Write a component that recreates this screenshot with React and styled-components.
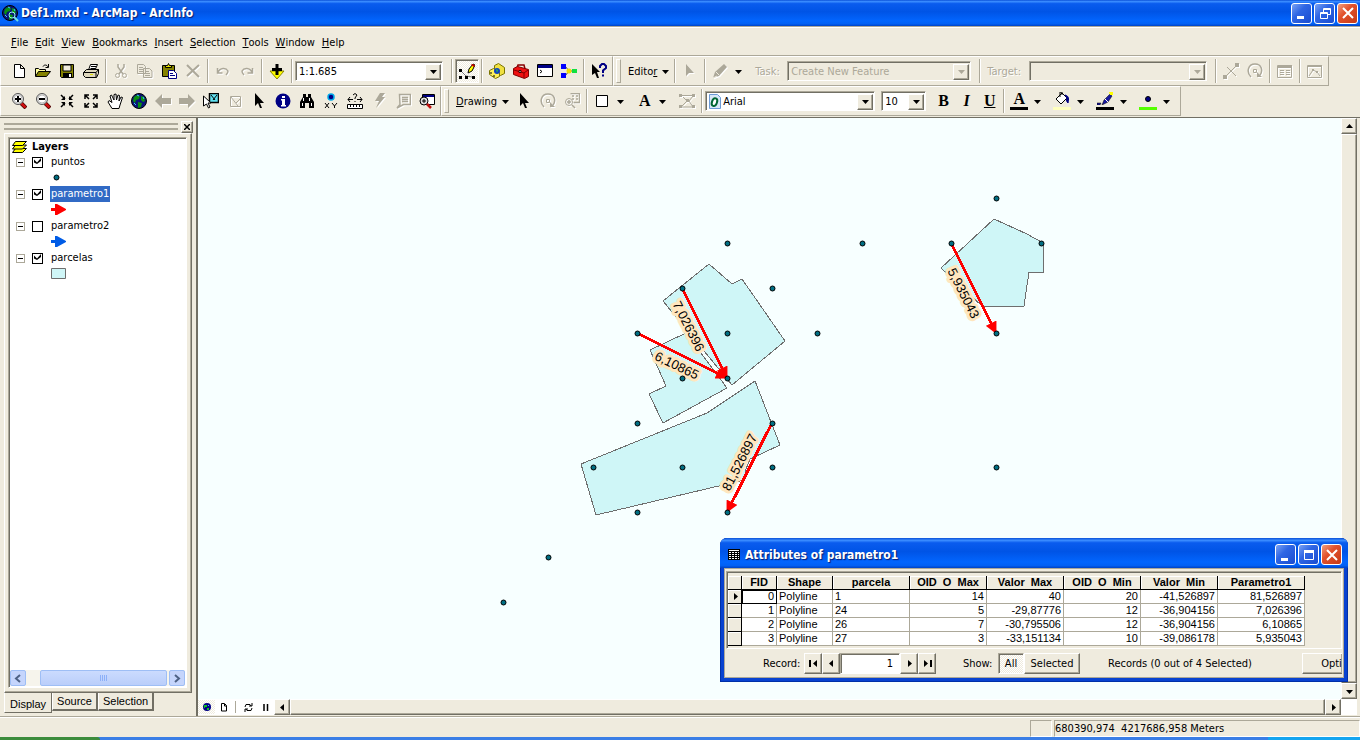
import React, { useState } from 'react'; // Import React and useState hook
import styled, { createGlobalStyle, css } from 'styled-components'; // Import styled-components for styling

// Menu entries of the main window
const menus = ['File', 'Edit', 'View', 'Bookmarks', 'Insert', 'Selection', 'Tools', 'Window', 'Help'];

// Sample points of the puntos layer
const points = [
    [798, 80], [529, 125], [664, 125], [753, 125], [843, 125], [574, 170], [484, 170],
    [439, 215], [529, 215], [619, 215], [798, 215], [484, 260], [529, 260], [439, 305],
    [574, 305], [395, 349], [484, 349], [574, 349], [798, 349], [439, 394], [529, 394],
    [350, 439], [305, 484],
];

// Polygons of the parcelas layer
const parcels = [
    '511,146 534,166 544,161 587,223 534,267 465,183',
    '488,215 452,232 468,268 451,276 465,305 529,270',
    '557,263 509,295 383,346 398,397 546,362 548,351 552,341 582,327',
    '796,101 829,116 845,125 845,154 831,154 826,188 784,188 743,150',
];

// Vectors of the parametro1 layer with their labels
const vectors = [
    { from: [484, 170], to: [529, 260], label: '7,026396', at: [491, 208], angle: 63 },
    { from: [439, 215], to: [529, 260], label: '6,10865', at: [479, 247], angle: 26 },
    { from: [574, 305], to: [529, 394], label: '81,526897', at: [541, 344], angle: -63 },
    { from: [753, 125], to: [798, 215], label: '5,935043', at: [766, 175], angle: 63 },
];

// Attribute table of parametro1
const columns = [
    { name: 'FID', width: 35, right: true },
    { name: 'Shape', width: 56 },
    { name: 'parcela', width: 77 },
    { name: 'OID  O  Max', width: 77, right: true },
    { name: 'Valor  Max', width: 77, right: true },
    { name: 'OID  O  Min', width: 77, right: true },
    { name: 'Valor  Min', width: 77, right: true },
    { name: 'Parametro1', width: 87, right: true },
];

const records = [
    ['0', 'Polyline', '1', '14', '40', '20', '-41,526897', '81,526897'],
    ['1', 'Polyline', '24', '5', '-29,87776', '12', '-36,904156', '7,026396'],
    ['2', 'Polyline', '26', '7', '-30,795506', '12', '-36,904156', '6,10865'],
    ['3', 'Polyline', '27', '3', '-33,151134', '10', '-39,086178', '5,935043'],
];

// Drawings of the toolbar icons, all on a 16 x 16 grid
const lens = (
    <>
        <path d='M10 10l5 5' stroke='#400' strokeWidth='4' />
        <path d='M10 10l4.5 4.5' stroke='#d01010' strokeWidth='2.5' />
        <circle cx='7' cy='6' r='5.5' fill='#e8e8e8' stroke='#555' />
        <circle cx='7' cy='6' r='4' fill='#fff' stroke='#bbb' />
    </>
);

const globe = (
    <>
        <circle cx='8' cy='8' r='7.5' fill='#0a1478' stroke='#000' />
        <path d='M3 4l3-2 3 1-1 3-3 1-1 3-2-2zM10 3l3 1 1 4-2 1-2-2zM7 9l4 1-1 4-3 1z' fill='#089010' />
        <path d='M3 10l2 2M12 4l1 2M6 2l2 1' stroke='#3cc8ff' />
    </>
);

const pointer = <path d='M4 0v13l3-3 2 5h2l-2-5h4z' fill='currentColor' />;

const icons = {
    new: <path d='M3.5 1.5h6l4 4v9h-10zM9.5 1.5v4h4' fill='#fff' stroke='#000' />,
    open: (
        <>
            <path d='M.5 13V5.5h3l1 1h6V9' fill='#ffff9c' stroke='#000' />
            <path d='M.5 13.5l3-5h12l-4 5z' fill='#848200' stroke='#000' />
            <path d='M8 3.5c1-2 4-2 5 .5M13.5 1v3.5h-3' fill='none' stroke='#000' />
        </>
    ),
    save: (
        <>
            <path d='M1.5 1.5h13v13h-12l-1-1z' fill='#848200' stroke='#000' />
            <path d='M4 2h8v6H4z' fill='#efebde' stroke='#000' />
            <path d='M4 10h9v5H4z' fill='#000' />
            <path d='M10 11h2v3h-2z' fill='#fff' />
        </>
    ),
    print: (
        <>
            <path d='M5.5 7l2-5.5h7L12 7z' fill='#fff' stroke='#000' />
            <path d='M8 3.5h5M7.5 5.5h5' stroke='#000' />
            <path d='M.5 9.5l3-3h12v4l-2 4h-11l-2-2z' fill='#ded7bd' stroke='#000' />
            <path d='M.5 9.5h12.5v5M13 9.5l2.5-3' fill='none' stroke='#000' />
            <path d='M7 11.5h3' stroke='#dede00' />
        </>
    ),
    cut: (
        <>
            <path d='M5 1v3l5 7M11 1v3l-5 7' fill='none' stroke='currentColor' strokeWidth='1.5' />
            <circle cx='4.5' cy='12.5' r='2' fill='none' stroke='currentColor' />
            <circle cx='11.5' cy='12.5' r='2' fill='none' stroke='currentColor' />
        </>
    ),
    copy: (
        <path
            d='M.5 1.5h6l2 2v7h-8zM2 4.5h4M2 6.5h4M2 8.5h4M6.5 5.5h6l2.5 2.5v6.5H6.5zM8 8.5h4M8 10.5h5M8 12.5h5'
            fill='#efebde'
            stroke='currentColor'
        />
    ),
    paste: (
        <>
            <path d='M1.5 2.5h12v11h-12z' fill='#848200' stroke='#000' />
            <path d='M4.5 4.5v-2h2l1-2 1 2h2v2z' fill='#e7e300' stroke='#000' />
            <path d='M7.5 7.5h5l3 3v5h-8z' fill='#fff' stroke='#000084' />
            <path d='M9 10.5h3M9 12.5h5' stroke='#000084' />
        </>
    ),
    remove: <path d='M2 2l12 12M14 2L2 13' stroke='currentColor' strokeWidth='2' />,
    undo: <path d='M2.5 5v5h5M3 9.5c2-5 8-5 10-1.5 0 2-1 3-2 4' fill='none' stroke='currentColor' strokeWidth='1.5' />,
    redo: <path d='M13.5 5v5h-5M13 9.5c-2-5-8-5-10-1.5 0 2 1 3 2 4' fill='none' stroke='currentColor' strokeWidth='1.5' />,
    add: (
        <>
            <path d='M1 8h14l-7 8z' fill='#ffff00' stroke='#8a8400' />
            <path d='M8 1v11M3 6.5h10' stroke='#000' strokeWidth='3' />
        </>
    ),
    editor: (
        <>
            <path d='M2 8l5 5 6 1' fill='none' stroke='#777' />
            <path d='M0 6h3v3H0zM0 13h3v3H0zM6 13h3v3H6zM13 13h3v3h-3z' fill='#000' />
            <path d='M9 10l1-4 4-5 2 1-3 6z' fill='#ffff00' stroke='#000' />
            <path d='M13 1l3 1-1 2-3-2z' fill='#c00' />
        </>
    ),
    catalog: (
        <>
            <path d='M5.5 2.5l4-2 6 4v6l-4 2-6-4z' fill='#f0e040' stroke='#7a7400' />
            <path d='M.5 7.5l4-2 6 4v4l-4 2-6-4z' fill='#ffef5a' stroke='#7a7400' />
            <circle cx='8' cy='8' r='3' fill='#1040c0' />
            <path d='M7 6l2 1-1 3z' fill='#30c040' />
            <path d='M2 9v2M4 13h2' stroke='#000' />
        </>
    ),
    toolbox: (
        <>
            <path d='M4 5l1-3h6l1 4' fill='none' stroke='#800' strokeWidth='1.5' />
            <path d='M.5 5.5l4-2 11 3v7l-4 2-11-4z' fill='#f01010' stroke='#800000' />
            <path d='M1 7l10 3 4-3M11 10v5' fill='none' stroke='#800000' />
            <path d='M6 7.5h2v2H6z' fill='#ddd' stroke='#400' />
        </>
    ),
    command: (
        <>
            <path d='M.5 1.5h15v12H.5z' fill='#fff' stroke='#000' />
            <path d='M1 2h14v3H1z' fill='#000084' />
            <path d='M3 7l2 1.5L3 10' fill='none' stroke='#000' />
        </>
    ),
    model: (
        <>
            <path d='M4 3l4 5 5 0M4 13l4-5' fill='none' stroke='#444' />
            <path d='M0 1h5v5H0zM0 10h5v5H0z' fill='#0000ff' />
            <circle cx='8' cy='8' r='2.5' fill='#f0e000' />
            <path d='M11 6h5v4h-5z' fill='#10e040' />
        </>
    ),
    help: (
        <>
            <path d='M1 1v11l3-2 2 5h2L6 9h3z' fill='#000' />
            <path d='M9 5V3l2-2h2l2 2v2l-3 2.5V10M11 12.5h2' fill='none' stroke='#000084' strokeWidth='2' />
        </>
    ),
    smallPointer: <path d='M4 1v12l3-3h5z' fill='currentColor' />,
    pencil: (
        <>
            <path d='M1 15l2-6 9-8 3 3-8 9z' fill='currentColor' />
            <path d='M4 9l3 3M1 15l4-2' stroke='#efebde' />
        </>
    ),
    split: (
        <>
            <path d='M2 14L14 2M4 4l9 9' stroke='currentColor' />
            <path d='M0 12h4v4H0zM12 0h4v4h-4z' fill='currentColor' />
        </>
    ),
    rotate: (
        <>
            <path d='M4 14C-1 9 1 1 8 1c7 0 8 7 5 11' fill='none' stroke='currentColor' strokeWidth='1.5' />
            <path d='M10 9v5h5z' fill='currentColor' />
            <path d='M6.5 6.5h3v3h-3z' fill='none' stroke='currentColor' />
        </>
    ),
    attributes: (
        <>
            <path d='M.5 2.5h14v12H.5zM3 7.5h4M3 9.5h4M3 11.5h4M9 7.5h4M9 9.5h4M9 11.5h4' fill='none' stroke='currentColor' />
            <path d='M1 2h14v3H1z' fill='currentColor' />
        </>
    ),
    sketch: (
        <>
            <path d='M.5 2.5h14v12H.5zM2 13l4-6 4 2 3 4' fill='none' stroke='currentColor' />
            <path d='M1 2h14v2H1zM5 6h2v2H5zM9 8h2v2H9z' fill='currentColor' />
        </>
    ),
    zoomIn: <>{lens}<path d='M4 6h6M7 3v6' stroke='#000' strokeWidth='2' /></>,
    zoomOut: <>{lens}<path d='M4 6h6' stroke='#000' strokeWidth='2' /></>,
    shrink: (
        <>
            <path d='M2 2l4 4M14 2l-4 4M2 14l4-4M14 14l-4-4' stroke='#000' strokeWidth='1.5' />
            <path d='M6 3v4H2zM10 3v4h4zM6 13V9H2zM10 13V9h4z' fill='#000' />
        </>
    ),
    grow: (
        <path
            d='M2 2l4 4M14 2l-4 4M2 14l4-4M14 14l-4-4M6 2H2v4M10 2h4v4M6 14H2v-4M10 14h4v-4'
            fill='none'
            stroke='#000'
            strokeWidth='1.5'
        />
    ),
    pan: (
        <path
            d='M5 15.5L1 9l1-1.5 3 2L3 3l1.5-1L7 7V1.5l2-.5.5 6L11 2l1.5.5L12 8l2-4 1.5.5L13 12l-1 3.5z'
            fill='#fff'
            stroke='#000'
        />
    ),
    globe,
    back: <path d='M0 8l7-7v4h9v6H7v4z' fill='currentColor' />,
    forward: <path d='M16 8L9 1v4H0v6h9v4z' fill='currentColor' />,
    selectFeatures: (
        <>
            <path d='M6.5.5h9v9h-9z' fill='#60e0f0' stroke='#000' strokeWidth='1.5' />
            <path d='M8 2l4 5M14 2l-4 5' stroke='#000' />
            <path d='M.5 3v10l3-2 2 4 1.5-1-2-4h3z' fill='#fff' stroke='#000' />
        </>
    ),
    clearSelection: <path d='M3.5 3.5h10v10h-10zM4 4l7 9M13 6l-4 4' fill='none' stroke='currentColor' />,
    pointer,
    info: (
        <>
            <circle cx='8' cy='8' r='7.5' fill='#000084' />
            <path d='M7 3h3v2H7zM6 6h4v6h1v1.5H6V12h1V7.5H6z' fill='#fff' />
        </>
    ),
    find: (
        <>
            <path d='M4 1h3v3h2V1h3v3l3 5v6h-5v-5H6v5H1V9l3-5z' fill='#000' />
            <path d='M4.5 5v3M10.5 5v3M3.5 10v3M12.5 10v3' stroke='#fff' />
        </>
    ),
    goToXY: (
        <>
            <circle cx='8' cy='4' r='3' fill='#000084' stroke='#00a8e8' strokeWidth='1.5' />
            <path d='M2 10l4 5M6 10l-4 5M9 10l2.5 3M14 10l-2.5 3v2' fill='none' stroke='#000' />
        </>
    ),
    measure: (
        <>
            <path d='M1 6.5h5M10 6.5h5M3 4L1 6.5 3 9M13 4l2 2.5L13 9M6 2l2-1.5 2 1.5-2 3v1M8 8v1' fill='none' stroke='#000' />
            <path d='M.5 11.5h15v4H.5z' fill='#fff' stroke='#000' />
            <path d='M3.5 12v2M6.5 12v2M9.5 12v2M12.5 12v2' stroke='#000' />
        </>
    ),
    hyperlink: <path d='M9 0h5l-3 4h3l-9 11 3-7H4z' fill='currentColor' />,
    htmlPopup: (
        <path d='M4.5 1.5h11v10h-7L2 15l3-3.5zM7 4.5h6M7 6.5h6M7 8.5h6' fill='none' stroke='currentColor' strokeWidth='1.5' />
    ),
    magnifier: (
        <>
            <path d='M3.5 1.5h12v10h-12z' fill='#fff' stroke='#000' />
            <path d='M4 2h11v2H4z' fill='#000084' />
            <circle cx='5' cy='8' r='4' fill='#ddd' stroke='#000' />
            <path d='M3 8h4M5 6v4' stroke='#000' />
            <path d='M8 11l4 4' stroke='#c01010' strokeWidth='2.5' />
        </>
    ),
    zoomSelected: (
        <>
            <path d='M6.5.5h9v9h-6M8 3h2M12 3h2M8 6h2M12 6h2' fill='none' stroke='currentColor' strokeWidth='1.5' />
            <circle cx='5' cy='9' r='3.5' fill='none' stroke='currentColor' />
            <path d='M3 9h4M5 7v4M8 12l3 3' stroke='currentColor' strokeWidth='1.5' />
        </>
    ),
    rectangle: <path d='M2.5 2.5h11v11h-11z' fill='#fff' stroke='#000' />,
    vertices: (
        <>
            <path d='M2 2.5h12M4 4l4 4-6 6h12l-4-6 4-5' fill='none' stroke='currentColor' />
            <path d='M0 1h3v3H0zM13 1h3v3h-3zM7 6h3v3H7zM0 12h3v3H0zM13 12h3v3h-3z' fill='currentColor' />
        </>
    ),
    fill: (
        <>
            <path d='M2 8l6-6 5 5-6 6z' fill='#fff' stroke='#000' />
            <path d='M6 6V1h2v3' fill='none' stroke='#000' />
            <path d='M11 4c4 1 4 4 3 8-2-2-2-4-1-5z' fill='#000084' stroke='#000084' />
        </>
    ),
    brush: (
        <>
            <path d='M0 12h4l-1 2H0zM5 14l2-5 6-6 2 2-4 6z' fill='#1818a0' stroke='#000' strokeWidth='.5' />
            <path d='M12 1h4v3h-3z' fill='#ffff00' />
            <path d='M8 8l3 3' stroke='#fff' />
        </>
    ),
    marker: <circle cx='8' cy='8' r='2.5' fill='#000084' stroke='#000' />,
};

// Icon names of the toolbars, in drawing order
const navigationTools = [
    ['zoomIn', 'Zoom in'], ['zoomOut', 'Zoom out'], ['shrink', 'Fixed zoom in'], ['grow', 'Fixed zoom out'],
    ['pan', 'Pan'], ['globe', 'Full extent'], ['back', 'Back', true], ['forward', 'Forward', true],
    ['selectFeatures', 'Select features'], ['clearSelection', 'Clear selection', true],
    ['pointer', 'Select elements'], ['info', 'Identify'], ['find', 'Find'], ['goToXY', 'Go to XY'],
    ['measure', 'Measure'], ['hyperlink', 'Hyperlink', true], ['htmlPopup', 'HTML popup', true],
    ['magnifier', 'Magnifier window'],
];

const Arrow = ({ dir = 'down' }) => { // Small black triangle used by drop downs and scroll bars
    const shapes = { down: 'M0 2h7l-3.5 4z', up: 'M0 5h7L3.5 1z', left: 'M5 0v7L1 3.5z', right: 'M2 0v7l4-3.5z' };
    return (
        <svg width='7' height='7' viewBox='0 0 7 7'>
            <path d={shapes[dir]} fill='currentColor' />
        </svg>
    );
};

const Tool = ({ name, label, disabled, active }) => (
    <ToolButton aria-label={label} title={label} disabled={disabled} $active={active}>
        <svg width='16' height='16' viewBox='0 0 16 16'>{icons[name]}</svg>
    </ToolButton>
);

const ColorTool = ({ name, label, color, children }) => ( // Tool with the current colour below it and a drop down
    <>
        <ToolButton aria-label={label} title={label} $stacked>
            {children || <svg width='16' height='13' viewBox='0 1 16 13'>{icons[name]}</svg>}
            <Swatch $color={color} />
        </ToolButton>
        <DropButton aria-label={label + ' options'}><Arrow /></DropButton>
    </>
);

const Combo = ({ label, value, width, disabled, icon }) => (
    <ComboFrame $width={width} $disabled={disabled}>
        {icon}
        <select aria-label={label} disabled={disabled}>
            <option>{value}</option>
        </select>
        <span><Arrow /></span>
    </ComboFrame>
);

const WindowButtons = ({ restored }) => (
    <WindowControls>
        <WindowButton aria-label='Minimize'>
            <svg width='18' height='18'><path d='M4 12h7v3H4z' fill='#fff' /></svg>
        </WindowButton>
        <WindowButton aria-label={restored ? 'Maximize' : 'Restore'}>
            <svg width='18' height='18' fill='none' stroke='#fff'>
                {restored
                    ? <path d='M4 4.5h10M4 5.5h10M4 6.5h10M4.5 4v9.5h9V4' />
                    : <path d='M7.5 8V4.5h7v6H12M7 5.5h8M4.5 8.5h7v6h-7zM4 9.5h8' />}
            </svg>
        </WindowButton>
        <WindowButton aria-label='Close' $close>
            <svg width='18' height='18'><path d='M4 4l10 10M14 4L4 14' stroke='#fff' strokeWidth='2' /></svg>
        </WindowButton>
    </WindowControls>
);

const Layer = ({ name, checked, onToggle, selected, symbol }) => (
    <>
        <TreeRow>
            <Expander aria-label={'Collapse ' + name} />
            <CheckBox type='checkbox' id={name} checked={checked} onChange={onToggle} />
            <LayerName htmlFor={name} $selected={selected}>{name}</LayerName>
        </TreeRow>
        <SymbolRow>{symbol}</SymbolRow>
    </>
);

function Contents() {
    const [visible, setVisible] = useState({ puntos: true, parametro1: true, parametro2: false, parcelas: true });
    const toggle = name => () => setVisible({ ...visible, [name]: !visible[name] });

    const arrow = color => (
        <svg width='16' height='12'><path d='M0 4h4V0h2l9 5v1l-9 5H4V7H0z' fill={color} /></svg>
    );
    const symbols = {
        puntos: <svg width='12' height='12'><circle cx='5.5' cy='5.5' r='2.5' fill='#006e82' stroke='#000' /></svg>,
        parametro1: arrow('#f00'),
        parametro2: arrow('#005ce6'),
        parcelas: <svg width='16' height='12'><path d='M.5.5h14v10H.5z' fill='#cff6f7' stroke='#6e6e6e' /></svg>,
    };

    return (
        <Panel>
            <PanelHead>
                <Ridge />
                <CloseButton aria-label='Close layers'>
                    <svg width='6' height='6'><path d='M0 0l6 6M6 0L0 6' stroke='#000' strokeWidth='1.5' /></svg>
                </CloseButton>
            </PanelHead>
            <PanelBody>
                <Tree>
                    <TreeTitle>
                        <svg width='16' height='12' viewBox='0 0 16 12' fill='#ff0' stroke='#000'>
                            <path d='M.5 11.5l3-4h11l-4 4z' />
                            <path d='M.5 8l3-4h11l-4 4z' />
                            <path d='M.5 4.5l3-4h11l-4 4z' />
                        </svg>
                        Layers
                    </TreeTitle>
                    {Object.keys(symbols).map(name => (
                        <Layer
                            key={name}
                            name={name}
                            checked={visible[name]}
                            onToggle={toggle(name)}
                            selected={name === 'parametro1'}
                            symbol={symbols[name]}
                        />
                    ))}
                    <LunaScroll>
                        <LunaButton aria-label='Scroll left'>
                            <svg width='8' height='9'><path d='M6 1L2 4.5 6 8' /></svg>
                        </LunaButton>
                        <LunaTrack><LunaThumb><i /><i /><i /><i /></LunaThumb></LunaTrack>
                        <LunaButton aria-label='Scroll right'>
                            <svg width='8' height='9'><path d='M2 1l4 3.5L2 8' /></svg>
                        </LunaButton>
                    </LunaScroll>
                </Tree>
            </PanelBody>
            <Tabs>
                <Tab $active>Display</Tab>
                <Tab>Source</Tab>
                <Tab>Selection</Tab>
            </Tabs>
        </Panel>
    );
}

function MapView() {
    return (
        <MapArea>
            <MapRow>
                <MapCanvas>
                    <defs>
                        <marker id='head' markerUnits='userSpaceOnUse' markerWidth='12' markerHeight='12' refX='11' refY='6' orient='auto'>
                            <path d='M0 0l12 6-12 6z' fill='#f00' />
                        </marker>
                    </defs>
                    {parcels.map(shape => (
                        <polygon key={shape} points={shape} fill='#cff6f7' stroke='#6e6e6e' shapeRendering='crispEdges' />
                    ))}
                    {vectors.map(({ label, at, angle }) => (
                        <MapLabel key={label} transform={`translate(${at[0]} ${at[1]}) rotate(${angle})`} y='5'>
                            {label}
                        </MapLabel>
                    ))}
                    {vectors.map(({ from, to, label }) => (
                        <line
                            key={label}
                            x1={from[0]}
                            y1={from[1]}
                            x2={to[0]}
                            y2={to[1]}
                            stroke='#f00'
                            strokeWidth='3'
                            shapeRendering='crispEdges'
                            markerEnd='url(#head)'
                        />
                    ))}
                    {points.map(([x, y]) => (
                        <circle key={x + '-' + y} cx={x + 0.5} cy={y + 0.5} r='2.5' fill='#006e82' stroke='#000' />
                    ))}
                </MapCanvas>
                <ScrollColumn>
                    <ScrollButton aria-label='Scroll up'><Arrow dir='up' /></ScrollButton>
                    <ScrollThumb />
                    <ScrollButton aria-label='Scroll down'><Arrow /></ScrollButton>
                </ScrollColumn>
            </MapRow>
            <MapFooter>
                <ViewButton aria-label='Data view' $active>
                    <svg width='8' height='8'>
                        <circle cx='4' cy='4' r='4' fill='#000084' />
                        <path d='M1 2h3v2H2v1H1zM4 5h2v2H4z' fill='#10c020' />
                        <path d='M5 2h1v1H5z' fill='#3cc8ff' />
                    </svg>
                </ViewButton>
                <ViewButton aria-label='Layout view'>
                    <svg width='8' height='9'><path d='M1.5.5h3l2 2v5.5h-5zM4.5 1v2h2' fill='#fff' stroke='#000' /></svg>
                </ViewButton>
                <FooterLine />
                <ViewButton aria-label='Refresh'>
                    <svg width='9' height='9'><path d='M1 4l1-2.5h4l1 1.5M8 0v3H5M8 5L7 7.5H3L2 6M1 9V6h3' fill='none' stroke='#000' /></svg>
                </ViewButton>
                <ViewButton aria-label='Pause'>
                    <svg width='6' height='7'><path d='M1 0v7M4.5 0v7' stroke='#000' strokeWidth='1.5' /></svg>
                </ViewButton>
                <ScrollButton aria-label='Scroll map left'><Arrow dir='left' /></ScrollButton>
                <ScrollThumb />
                <ScrollButton aria-label='Scroll map right'><Arrow dir='right' /></ScrollButton>
            </MapFooter>
        </MapArea>
    );
}

function Attributes() {
    const [record, setRecord] = useState('1'); // Number of the current record

    return (
        <AttributeWindow>
            <AttributeTitle>
                <svg width='12' height='11' viewBox='0 0 12 11'>
                    <path d='M0 0h12v11H0z' fill='#000' />
                    <path d='M1 1h10v1H1zM1 3h2v1H1zM4 3h2v1H4zM7 3h2v1H7zM10 3h1v1h-1zM1 5h2v1H1zM4 5h2v1H4zM7 5h2v1H7zM10 5h1v1h-1zM1 7h2v1H1zM4 7h2v1H4zM7 7h2v1H7zM10 7h1v1h-1zM1 9h2v1H1zM4 9h2v1H4zM7 9h2v1H7zM10 9h1v1h-1z' fill='#fff' />
                </svg>
                <h2>Attributes of parametro1</h2>
                <WindowButtons restored />
            </AttributeTitle>
            <AttributeBody>
                <TableFrame>
                    <Table>
                        <colgroup>
                            <Col $width={14} />
                            {columns.map(column => <Col key={column.name} $width={column.width} />)}
                        </colgroup>
                        <thead>
                            <tr>
                                <th aria-label='Row' />
                                {columns.map(column => <th key={column.name}>{column.name}</th>)}
                            </tr>
                        </thead>
                        <tbody>
                            {records.map((row, index) => (
                                <tr key={row[0]}>
                                    <RowHead>{index === 0 && <Arrow dir='right' />}</RowHead>
                                    {row.map((cell, i) => (
                                        <Cell key={i} $right={columns[i].right} $current={index === 0 && i === 0}>{cell}</Cell>
                                    ))}
                                </tr>
                            ))}
                        </tbody>
                    </Table>
                </TableFrame>
                <RecordBar>
                    <RecordLabel htmlFor='record'>Record:</RecordLabel>
                    <RecordButton aria-label='First record'>
                        <svg width='9' height='7'><path d='M0 0h2v7H0zM8 0v7L4 3.5z' /></svg>
                    </RecordButton>
                    <RecordButton aria-label='Previous record'><Arrow dir='left' /></RecordButton>
                    <RecordInput id='record' value={record} onChange={e => setRecord(e.target.value)} />
                    <RecordButton aria-label='Next record'><Arrow dir='right' /></RecordButton>
                    <RecordButton aria-label='Last record'>
                        <svg width='9' height='7'><path d='M7 0h2v7H7zM1 0v7l4-3.5z' /></svg>
                    </RecordButton>
                    <ShowLabel>Show:</ShowLabel>
                    <TextButton $width={26} $active>All</TextButton>
                    <TextButton $width={56}>Selected</TextButton>
                    <RecordCount>Records (0 out of 4 Selected)</RecordCount>
                    <OptionsButton>Opti</OptionsButton>
                </RecordBar>
            </AttributeBody>
        </AttributeWindow>
    );
}

function App() {
    return (
        <Desktop>
            <GlobalStyle />
            <TitleBar>
                <svg width='17' height='17' viewBox='0 0 17 17'>
                    {globe}
                    <circle cx='10' cy='10' r='3' fill='none' stroke='#9ee' />
                    <path d='M12 12l4 4' stroke='#6fe0e0' strokeWidth='2' />
                </svg>
                <h1>Def1.mxd - ArcMap - ArcInfo</h1>
                <WindowButtons />
            </TitleBar>
            <MenuBar>
                {menus.map(menu => (
                    <MenuButton key={menu}><u>{menu[0]}</u>{menu.slice(1)}</MenuButton>
                ))}
            </MenuBar>
            <ToolbarRow>
                <Band>
                    <Tool name='new' label='New' />
                    <Tool name='open' label='Open' />
                    <Tool name='save' label='Save' />
                    <Tool name='print' label='Print' />
                    <Separator />
                    <Tool name='cut' label='Cut' disabled />
                    <Tool name='copy' label='Copy' disabled />
                    <Tool name='paste' label='Paste' />
                    <Tool name='remove' label='Delete' disabled />
                    <Separator />
                    <Tool name='undo' label='Undo' disabled />
                    <Tool name='redo' label='Redo' disabled />
                    <Separator />
                    <Tool name='add' label='Add data' />
                    <Separator />
                    <Combo label='Map scale' value='1:1.685' width={148} />
                    <Gap />
                    <Separator />
                    <Tool name='editor' label='Editor toolbar' active />
                    <Separator />
                    <Tool name='catalog' label='ArcCatalog' />
                    <Tool name='toolbox' label='ArcToolbox' />
                    <Tool name='command' label='Command line' />
                    <Tool name='model' label='ModelBuilder' />
                    <Separator />
                    <Tool name='help' label="What's this?" />
                </Band>
                <Band $grip>
                    <MenuTool>Edito<u>r</u><Arrow /></MenuTool>
                    <Separator />
                    <Tool name='smallPointer' label='Edit tool' disabled />
                    <Separator />
                    <Tool name='pencil' label='Sketch tool' disabled />
                    <DropButton aria-label='Sketch tools'><Arrow /></DropButton>
                    <ToolLabel $width={36}>Task:</ToolLabel>
                    <Combo label='Task' value='Create New Feature' width={184} disabled />
                    <Gap />
                    <Separator />
                    <ToolLabel $width={46}>Target:</ToolLabel>
                    <Combo label='Target' value='' width={178} disabled />
                    <Gap />
                    <Separator />
                    <Tool name='split' label='Split' disabled />
                    <Tool name='rotate' label='Rotate' disabled />
                    <Separator />
                    <Tool name='attributes' label='Attributes' disabled />
                    <Separator />
                    <Tool name='sketch' label='Sketch properties' disabled />
                </Band>
            </ToolbarRow>
            <ToolbarRow>
                <Band>
                    {navigationTools.map(([name, label, disabled]) => (
                        <Tool key={name} name={name} label={label} disabled={disabled} />
                    ))}
                </Band>
                <Band $grip>
                    <MenuTool><u>D</u>rawing<Arrow /></MenuTool>
                    <Tool name='pointer' label='Select drawing' />
                    <Tool name='rotate' label='Rotate drawing' disabled />
                    <Tool name='zoomSelected' label='Zoom to selected' disabled />
                    <Separator />
                    <Tool name='rectangle' label='New rectangle' />
                    <DropButton aria-label='Shapes'><Arrow /></DropButton>
                    <LetterButton aria-label='New text'>A</LetterButton>
                    <DropButton aria-label='Text tools'><Arrow /></DropButton>
                    <Tool name='vertices' label='Edit vertices' disabled />
                    <Separator />
                    <Combo
                        label='Font'
                        value='Arial'
                        width={170}
                        icon={(
                            <svg width='14' height='15'>
                                <path d='M1.5.5h8l3 3v11h-11z' fill='#d6e7f7' stroke='#6b9ad6' />
                                <ellipse cx='6.5' cy='8' rx='2.5' ry='4' fill='#fff' stroke='#063' strokeWidth='2' transform='rotate(20 6 8)' />
                            </svg>
                        )}
                    />
                    <Gap />
                    <Combo label='Font size' value='10' width={45} />
                    <Gap />
                    <LetterButton aria-label='Bold'>B</LetterButton>
                    <LetterButton aria-label='Italic' $italic>I</LetterButton>
                    <LetterButton aria-label='Underline'><u>U</u></LetterButton>
                    <Separator />
                    <ColorTool label='Font color' color='#000'><b>A</b></ColorTool>
                    <ColorTool name='fill' label='Fill color' color='#ffffbe' />
                    <ColorTool name='brush' label='Line color' color='#000' />
                    <ColorTool name='marker' label='Marker color' color='#55ff00' />
                </Band>
            </ToolbarRow>
            <Workspace>
                <Contents />
                <MapView />
                <Attributes />
            </Workspace>
            <StatusBar>
                <StatusCell $width={22} />
                <StatusCell $width={306}>680390,974&nbsp; 4217686,958 Meters</StatusCell>
            </StatusBar>
            <TaskBar><StartEdge /><TrayEdge /></TaskBar>
        </Desktop>
    );
}

const face = '#efebde'; // Colour of the window face
const shade = '#aca899'; // Colour of the darker edges

const raised = css`
    border: 1px solid;
    border-color: #fff #716f64 #716f64 #fff;
    box-shadow: inset -1px -1px 0 ${shade};
    background: ${face};
`;

const sunken = css`
    border: 1px solid;
    border-color: ${shade} #fff #fff ${shade};
    box-shadow: inset 1px 1px 0 #716f64;
`;

const dither = css`
    background: repeating-conic-gradient(#fff 0 25%, ${face} 0 50%) 0 0 / 2px 2px;
`;

const GlobalStyle = createGlobalStyle`
    *{
        box-sizing: border-box;
    }
    body{
        margin: 0;
        overflow: hidden;
        background: ${face};
    }
    body, button, input, select, table{
        font-family: 'DejaVu Sans Condensed', 'Liberation Sans', sans-serif;
        font-size: 11px;
        color: #000;
    }
    button{
        display: flex;
        align-items: center;
        justify-content: center;
        flex: none;
        padding: 0;
        border: none;
        background: none;
    }
    svg{
        flex: none;
    }
`;

const Desktop = styled.div`
    display: flex;
    flex-direction: column;
    height: 100vh;
    background: ${face};
`;

const TitleBar = styled.header`
    display: flex;
    align-items: center;
    flex: none;
    gap: 2px;
    height: 26px;
    padding: 0 2px;
    background: linear-gradient(#0a50d8 0, #3a8cff 6%, #0a5cee 14%, #0054e6 45%, #0265fe 80%, #0260f4 92%, #0042c4 100%);

    h1{
        flex: 1;
        margin: 0;
        font-size: 12px;
        line-height: 16px;
        color: #fff;
        text-shadow: 1px 1px 1px #0a1c6e;
    }
`;

const WindowControls = styled.div`
    display: flex;
    gap: 2px;
`;

const WindowButton = styled.button`
    width: 21px;
    height: 21px;
    border: 1px solid #fff;
    border-radius: 3px;
    background: ${({ $close }) => ($close
        ? 'linear-gradient(135deg, #f0a080, #e2512c 40%, #c63a16)'
        : 'linear-gradient(135deg, #7aa2f4, #2f66e4 40%, #1a4cd0)')};
`;

const MenuBar = styled.nav`
    display: flex;
    align-items: center;
    flex: none;
    gap: 7px;
    height: 30px;
    padding: 3px 11px 0;
    border-top: 1px solid ${shade};
    border-bottom: 1px solid ${shade};
    box-shadow: inset 0 1px 0 #fff;
`;

const MenuButton = styled.button`
    height: 20px;
`;

const ToolbarRow = styled.div`
    display: flex;
    flex: none;
    height: 30px;

    & + &{
        height: 31px;
    }
`;

const Band = styled.div`
    display: flex;
    align-items: center;
    height: 30px;
    padding: 0 1px 0 6px;
    border-style: solid;
    border-width: 1px;
    border-color: #fff ${shade} ${shade} #fff;

    ${({ $grip }) => $grip && css`
        &::before{
            content: '';
            width: 3px;
            height: 22px;
            margin: 0 4px 0 -4px;
            border: 1px solid;
            border-color: #fff ${shade} ${shade} #fff;
        }
    `}
`;

const ToolButton = styled.button`
    width: 24px;
    height: 24px;
    flex-direction: ${({ $stacked }) => ($stacked ? 'column' : 'row')};
    ${({ $active }) => $active && css`${sunken} ${dither}`}

    b{
        font-family: 'Liberation Serif', serif;
        font-size: 16px;
        line-height: 13px;
    }
    &:disabled{
        color: ${shade};
        filter: drop-shadow(1px 1px 0 #fff);
    }
`;

const Swatch = styled.span`
    width: 18px;
    height: 3px;
    margin-top: 2px;
    background: ${({ $color }) => $color};
`;

const DropButton = styled.button`
    width: 19px;
    height: 24px;
    padding-right: 6px;
`;

const LetterButton = styled.button`
    width: 23px;
    height: 24px;
    font-family: 'Liberation Serif', serif;
    font-size: 16px;
    font-weight: bold;
    font-style: ${({ $italic }) => ($italic ? 'italic' : 'normal')};
`;

const MenuTool = styled.button`
    height: 24px;
    padding: 0 3px;

    svg{
        margin-left: 5px;
    }
`;

const Separator = styled.span`
    flex: none;
    width: 2px;
    height: 24px;
    margin: 0 2px;
    border-left: 1px solid ${shade};
    border-right: 1px solid #fff;
`;

const Gap = styled.span`
    flex: none;
    width: 6px;
`;

const ToolLabel = styled.span`
    flex: none;
    width: ${({ $width }) => $width}px;
    padding-left: 4px;
    color: ${shade};
    text-shadow: 1px 1px 0 #fff;
`;

const ComboFrame = styled.div`
    ${sunken}
    display: flex;
    align-items: center;
    flex: none;
    width: ${({ $width }) => $width}px;
    height: 20px;
    padding: 2px 1px 1px 2px;
    background: ${({ $disabled }) => ($disabled ? face : '#fff')};
    color: ${({ $disabled }) => ($disabled ? shade : '#000')};

    select{
        flex: 1;
        min-width: 0;
        height: 15px;
        padding: 0 1px;
        border: none;
        outline: none;
        appearance: none;
        background: transparent;
        color: inherit;
        opacity: 1;
    }
    span{
        ${raised}
        display: flex;
        align-items: center;
        justify-content: center;
        width: 16px;
        height: 16px;
    }
`;

const Workspace = styled.main`
    position: relative;
    display: flex;
    flex: 1;
    min-height: 0;
    border-top: 1px solid #716f64;
`;

const Panel = styled.aside`
    display: flex;
    flex-direction: column;
    flex: none;
    width: 198px;
    padding: 2px 3px 3px 4px;
    border-right: 2px solid #716f64;
`;

const PanelHead = styled.div`
    display: flex;
    align-items: center;
    gap: 3px;
    height: 13px;
`;

const Ridge = styled.span`
    flex: 1;
    height: 7px;
    border: solid ${shade};
    border-width: 2px 0;
`;

const CloseButton = styled.button`
    ${raised}
    width: 12px;
    height: 12px;
`;

const PanelBody = styled.div`
    display: flex;
    flex: 1;
    min-height: 0;
    margin-right: 1px;
    padding: 3px 4px 4px 3px;
    border: 1px solid;
    border-color: #fff #716f64 #716f64 #fff;
    box-shadow: inset -1px -1px 0 ${shade};
`;

const Tree = styled.div`
    ${sunken}
    display: flex;
    flex-direction: column;
    flex: 1;
    padding: 1px;
    background: #fff;
`;

const TreeTitle = styled.div`
    display: flex;
    align-items: center;
    gap: 4px;
    height: 15px;
    padding-left: 2px;
    font-weight: bold;
`;

const TreeRow = styled.div`
    display: flex;
    align-items: center;
    height: 16px;
    padding-left: 6px;
`;

const Expander = styled.button`
    width: 9px;
    height: 9px;
    margin-right: 7px;
    border: 1px solid ${shade};

    &::before{
        content: '';
        width: 5px;
        height: 1px;
        background: #000;
    }
`;

const CheckBox = styled.input`
    width: 11px;
    height: 11px;
    margin: 0 7px 0 0;
    border: 1px solid #000;
    appearance: none;

    &:checked::before{
        content: '';
        display: block;
        width: 7px;
        height: 4px;
        margin: 1px;
        background: #000;
        clip-path: polygon(0 25%, 43% 75%, 100% 0, 100% 50%, 43% 100%, 0 75%);
        scale: 1 1.5;
    }
`;

const LayerName = styled.label`
    padding: 0 1px;
    line-height: 16px;
    background: ${({ $selected }) => ($selected ? '#316ac5' : 'transparent')};
    color: ${({ $selected }) => ($selected ? '#fff' : '#000')};
`;

const SymbolRow = styled.div`
    display: flex;
    align-items: center;
    height: 16px;
    padding-left: 41px;
`;

const LunaScroll = styled.div`
    display: flex;
    height: 16px;
    margin-top: auto;
    background: #f6f4ec;
`;

const LunaButton = styled.button`
    width: 16px;
    height: 16px;
    border: 1px solid #9ebef5;
    border-radius: 2px;
    background: #c5d5fc;

    path{
        fill: none;
        stroke: #4d6185;
        stroke-width: 2;
    }
`;

const LunaTrack = styled.div`
    display: flex;
    flex: 1;
    padding: 0 2px 0 14px;
`;

const LunaThumb = styled.div`
    display: flex;
    align-items: center;
    justify-content: center;
    flex: 1;
    gap: 1px;
    border: 1px solid #9ebef5;
    border-radius: 2px;
    background: linear-gradient(#cbdbfe, #bacefa);

    i{
        width: 1px;
        height: 6px;
        background: #8cb0f8;
    }
`;

const Tabs = styled.div`
    display: flex;
    align-items: flex-start;
    height: 20px;
`;

const Tab = styled.button`
    height: ${({ $active }) => ($active ? 20 : 18)}px;
    padding: ${({ $active }) => ($active ? '2px 5px 0' : '0 4px')};
    background: ${face};
    border: solid;
    border-color: #fff #716f64 #716f64 #fff;
    border-width: ${({ $active }) => ($active ? '0 1px 1px' : '0 2px 2px 1px')};
    font-family: 'Liberation Sans', sans-serif;
    font-size: 11px;
`;

const MapArea = styled.section`
    display: flex;
    flex-direction: column;
    flex: 1;
    min-width: 0;
    padding: 0 3px 1px 0;
`;

const MapRow = styled.div`
    display: flex;
    flex: 1;
    min-height: 0;
`;

const MapCanvas = styled.svg`
    flex: 1;
    min-width: 0;
    height: 100%;
    background: #f7ffff;
`;

const MapLabel = styled.text`
    font-family: 'Liberation Sans', sans-serif;
    font-size: 13px;
    fill: #000;
    stroke: #ffe6be;
    stroke-width: 6px;
    stroke-linejoin: round;
    paint-order: stroke;
    text-anchor: middle;
`;

const ScrollColumn = styled.div`
    display: flex;
    flex-direction: column;
    width: 16px;
`;

const ScrollButton = styled.button`
    ${raised}
    width: 16px;
    height: 16px;
`;

const ScrollThumb = styled.div`
    ${raised}
    flex: 1;
`;

const MapFooter = styled.div`
    display: flex;
    align-items: center;
    flex: none;
    height: 16px;
    padding-right: 16px;
    background: #fff;

    ${ScrollThumb}{
        height: 16px;
    }
`;

const ViewButton = styled.button`
    width: 17px;
    height: 14px;
    ${({ $active }) => $active && dither}
`;

const FooterLine = styled.span`
    width: 1px;
    height: 12px;
    margin: 0 4px 0 3px;
    background: ${shade};
`;

const AttributeWindow = styled.section`
    position: absolute;
    right: 12px;
    bottom: 34px;
    display: flex;
    flex-direction: column;
    width: 628px;
    padding: 0 4px 4px;
    border-radius: 7px 7px 0 0;
    background: #0842d0;
    box-shadow: inset 0 0 0 1px #0030a8;
`;

const AttributeTitle = styled.div`
    display: flex;
    align-items: center;
    gap: 5px;
    height: 30px;
    margin: 0 -4px;
    padding: 3px 6px 0 8px;
    border-radius: 7px 7px 0 0;
    background: linear-gradient(#0a50d8 0, #3a8cff 8%, #0a5cee 16%, #0054e6 45%, #0265fe 80%, #0260f4 92%, #0042c4 100%);

    h2{
        flex: 1;
        margin: 0;
        font-size: 12px;
        line-height: 16px;
        color: #fff;
        text-shadow: 1px 1px 1px #0a1c6e;
    }
`;

const AttributeBody = styled.div`
    overflow: hidden;
    padding: 2px 1px;
    background: ${face};
    border: 1px solid ${shade};
`;

const TableFrame = styled.div`
    ${sunken}
    height: 78px;
    padding: 4px 1px 1px;
`;

const Table = styled.table`
    table-layout: fixed;
    width: 577px;
    border-collapse: separate;
    border-spacing: 0;
    font-family: 'Liberation Sans', sans-serif;

    th{
        height: 14px;
        padding: 0;
        border-right: 1px solid #000;
        border-bottom: 1px solid #000;
        box-shadow: inset 1px 1px 0 #fff;
        background: ${face};
        font-size: 11px;
        line-height: 13px;
        white-space: pre;
    }
`;

const Col = styled.col`
    width: ${({ $width }) => $width}px;
`;

const RowHead = styled.td`
    height: 14px;
    padding: 0 0 0 4px;
    border-right: 1px solid #000;
    border-bottom: 1px solid #000;
    box-shadow: inset 1px 1px 0 #fff;
    background: ${face};
    line-height: 9px;
`;

const Cell = styled.td`
    height: 14px;
    padding: 0 2px;
    border-right: 1px solid ${shade};
    border-bottom: 1px solid ${shade};
    background: #fff;
    line-height: 13px;
    text-align: ${({ $right }) => ($right ? 'right' : 'left')};
    ${({ $current }) => $current && 'outline: 1px solid #000; outline-offset: -1px;'}
`;

const RecordBar = styled.div`
    display: flex;
    align-items: center;
    height: 26px;
    padding-top: 3px;
`;

const RecordLabel = styled.label`
    width: 78px;
    padding-left: 37px;
`;

const RecordButton = styled.button`
    ${raised}
    width: 18px;
    height: 21px;
`;

const RecordInput = styled.input`
    ${sunken}
    width: 60px;
    height: 21px;
    padding: 0 6px;
    background: #fff;
    text-align: right;
`;

const ShowLabel = styled.span`
    width: 62px;
    padding-left: 27px;
`;

const TextButton = styled.button`
    ${({ $active }) => ($active ? css`${sunken} ${dither}` : raised)}
    width: ${({ $width }) => $width}px;
    height: 21px;
`;

const RecordCount = styled.span`
    flex: 1;
    padding-left: 28px;
    white-space: nowrap;
`;

const OptionsButton = styled.button`
    ${raised}
    width: 40px;
    height: 21px;
    border-right: none;
    padding-left: 18px;
`;

const StatusBar = styled.footer`
    display: flex;
    align-items: flex-end;
    justify-content: flex-end;
    flex: none;
    gap: 2px;
    height: 21px;
    border-top: 1px solid ${shade};
    box-shadow: inset 0 1px 0 #fff;
`;

const StatusCell = styled.div`
    width: ${({ $width }) => $width}px;
    height: 17px;
    border: 1px solid;
    border-color: ${shade} #fff #fff ${shade};
    line-height: 15px;
`;

const TaskBar = styled.div`
    display: flex;
    justify-content: space-between;
    flex: none;
    height: 3px;
    background: #3a7ee6;
`;

const StartEdge = styled.span`
    width: 100px;
    border-radius: 0 3px 0 0;
    background: #3c8c3c;
`;

const TrayEdge = styled.span`
    width: 92px;
    background: #14a5f0;
`;

export default App;
